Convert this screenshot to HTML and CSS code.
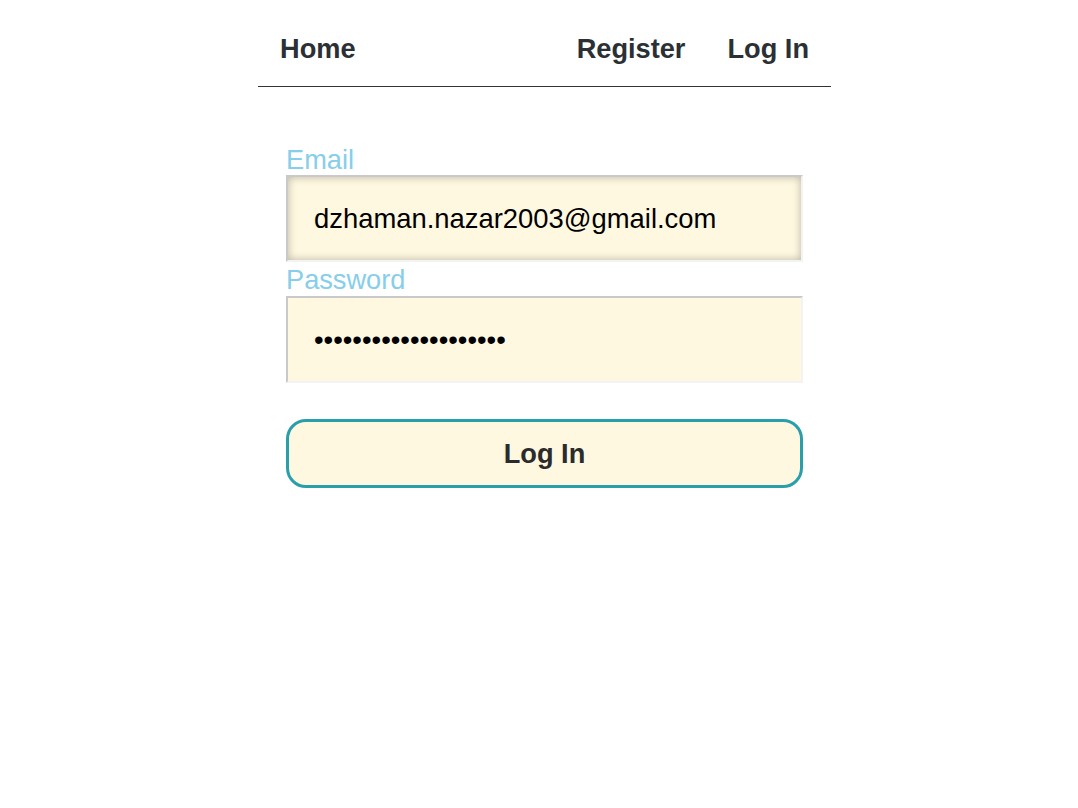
FILE: index.html
```html
<!DOCTYPE html>
<html>
<head>
<meta charset="utf-8">
<link rel="stylesheet" href="styles.css">
</head>
<body>
<div class="page">
  <nav class="nav">
    <a class="nav-link" href="#">Home</a>
    <div class="nav-right">
      <a class="nav-link" href="#">Register</a>
      <a class="nav-link" href="#">Log In</a>
    </div>
  </nav>
  <form class="form">
    <label class="label" for="email">Email</label>
    <input class="field field-focus" id="email" type="text" value="dzhaman.nazar2003@gmail.com">
    <label class="label label-second" for="pw">Password</label>
    <input class="field field-second" id="pw" type="password" value="abcdefghijklmnopqrst">
    <button class="btn" type="button">Log In</button>
  </form>
</div>
</body>
</html>
```
FILE: styles.css
```css
* { box-sizing: border-box; }
html, body { margin: 0; padding: 0; background: #fff; }
body {
  font-family: "Liberation Sans", Arial, sans-serif;
  padding-left: 11px;
}
.page {
  width: 573px;
  margin: 0 auto;
}
.nav {
  display: flex;
  justify-content: space-between;
  align-items: center;
  height: 87px;
  padding: 12px 22px 0;
  border-bottom: 1px solid #333;
}
.nav-right { display: flex; gap: 42px; }
.nav-link {
  font-size: 27.2px;
  font-weight: bold;
  color: #2b3035;
  text-decoration: none;
}
.form {
  display: flex;
  flex-direction: column;
  padding: 57px 28px 0;
}
.label {
  font-size: 27.2px;
  line-height: 31px;
  height: 31px;
  color: #87ceeb;
}
.label-second { margin-top: 2px; }
.field {
  height: 87px;
  width: 517px;
  padding: 0 24px 0 26px;
  font-family: "Liberation Sans", Arial, sans-serif;
  font-size: 27.4px;
  color: #000;
  background: #fef8e1;
  border: 2px solid;
  border-color: #c9c9c9 #f3f3f3 #f3f3f3 #c9c9c9;
  outline: none;
}
.field-second { margin-top: 1px; }
.field-focus {
  box-shadow: inset 0 0 9px rgba(0, 0, 0, 0.28);
}
.btn {
  margin-top: 36px;
  height: 69px;
  width: 517px;
  background: #fef8e1;
  border: 3px solid #2a9fac;
  border-radius: 20px;
  font-family: "Liberation Sans", Arial, sans-serif;
  font-size: 27.2px;
  font-weight: bold;
  color: #2b2b2b;
}
```
